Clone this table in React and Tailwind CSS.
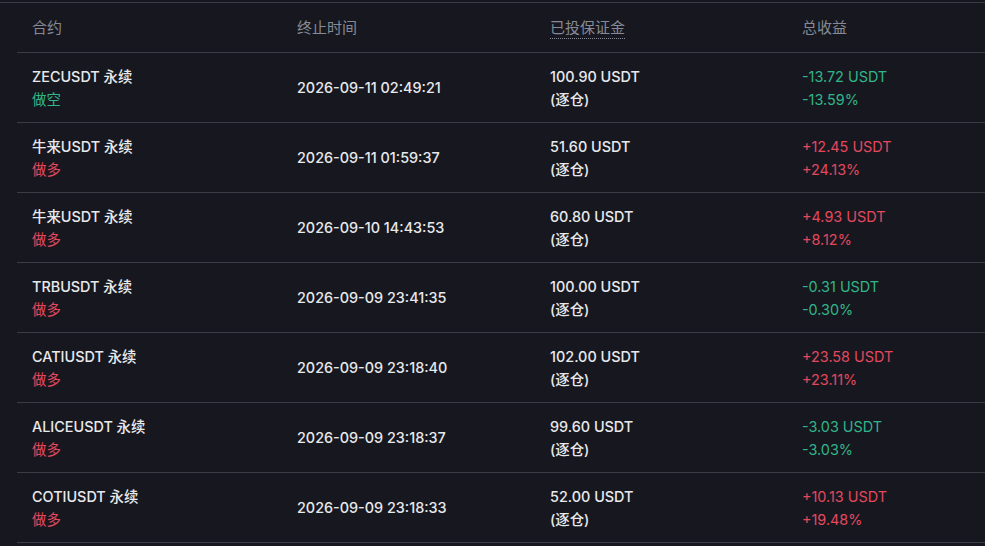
import React from "react";

const rows = [
  { sym: "ZECUSDT 永续", side: "做空", short: true, time: "2026-09-11 02:49:21", margin: "100.90 USDT", pnl: "-13.72 USDT", pct: "-13.59%", up: false },
  { sym: "牛来USDT 永续", side: "做多", short: false, time: "2026-09-11 01:59:37", margin: "51.60 USDT", pnl: "+12.45 USDT", pct: "+24.13%", up: true },
  { sym: "牛来USDT 永续", side: "做多", short: false, time: "2026-09-10 14:43:53", margin: "60.80 USDT", pnl: "+4.93 USDT", pct: "+8.12%", up: true },
  { sym: "TRBUSDT 永续", side: "做多", short: false, time: "2026-09-09 23:41:35", margin: "100.00 USDT", pnl: "-0.31 USDT", pct: "-0.30%", up: false },
  { sym: "CATIUSDT 永续", side: "做多", short: false, time: "2026-09-09 23:18:40", margin: "102.00 USDT", pnl: "+23.58 USDT", pct: "+23.11%", up: true },
  { sym: "ALICEUSDT 永续", side: "做多", short: false, time: "2026-09-09 23:18:37", margin: "99.60 USDT", pnl: "-3.03 USDT", pct: "-3.03%", up: false },
  { sym: "COTIUSDT 永续", side: "做多", short: false, time: "2026-09-09 23:18:33", margin: "52.00 USDT", pnl: "+10.13 USDT", pct: "+19.48%", up: true },
];

const grid = "grid grid-cols-[280px_253px_252px_1fr]";

export default function App() {
  return (
    <div
      className="w-[985px] h-[546px] overflow-hidden bg-[#17181f] text-[14.4px]"
      style={{ fontFamily: '"Inter", "Noto Sans CJK SC", sans-serif' }}
    >
      <div className="h-[2px]" />
      <div className="h-px bg-[#3a3c46]" />
      <div className="ml-[17px]">
        <div className={`${grid} h-[50px] pt-[2px] items-center border-b border-[#3a3c46] text-[#858a96] text-[15px]`}>
          <div className="pl-[15px]">合约</div>
          <div>终止时间</div>
          <div>
            <span className="border-b border-dotted border-[#858a96] pb-[1px]">已投保证金</span>
          </div>
          <div>总收益</div>
        </div>
        {rows.map((r, i) => (
          <div key={i} className={`${grid} h-[70px] items-center border-b border-[#3a3c46] leading-[23px]`}>
            <div className="pl-[15px]">
              <div className="text-[#e8e9ec] font-medium">{r.sym}</div>
              <div className={r.short ? "text-[#31b58a]" : "text-[#e3485f]"}>{r.side}</div>
            </div>
            <div className="text-[#e8e9ec] font-medium">{r.time}</div>
            <div className="text-[#e8e9ec] font-medium">
              <div>{r.margin}</div>
              <div>(逐仓)</div>
            </div>
            <div className={r.up ? "text-[#e3485f]" : "text-[#31b58a]"}>
              <div>{r.pnl}</div>
              <div>{r.pct}</div>
            </div>
          </div>
        ))}
      </div>
    </div>
  );
}
